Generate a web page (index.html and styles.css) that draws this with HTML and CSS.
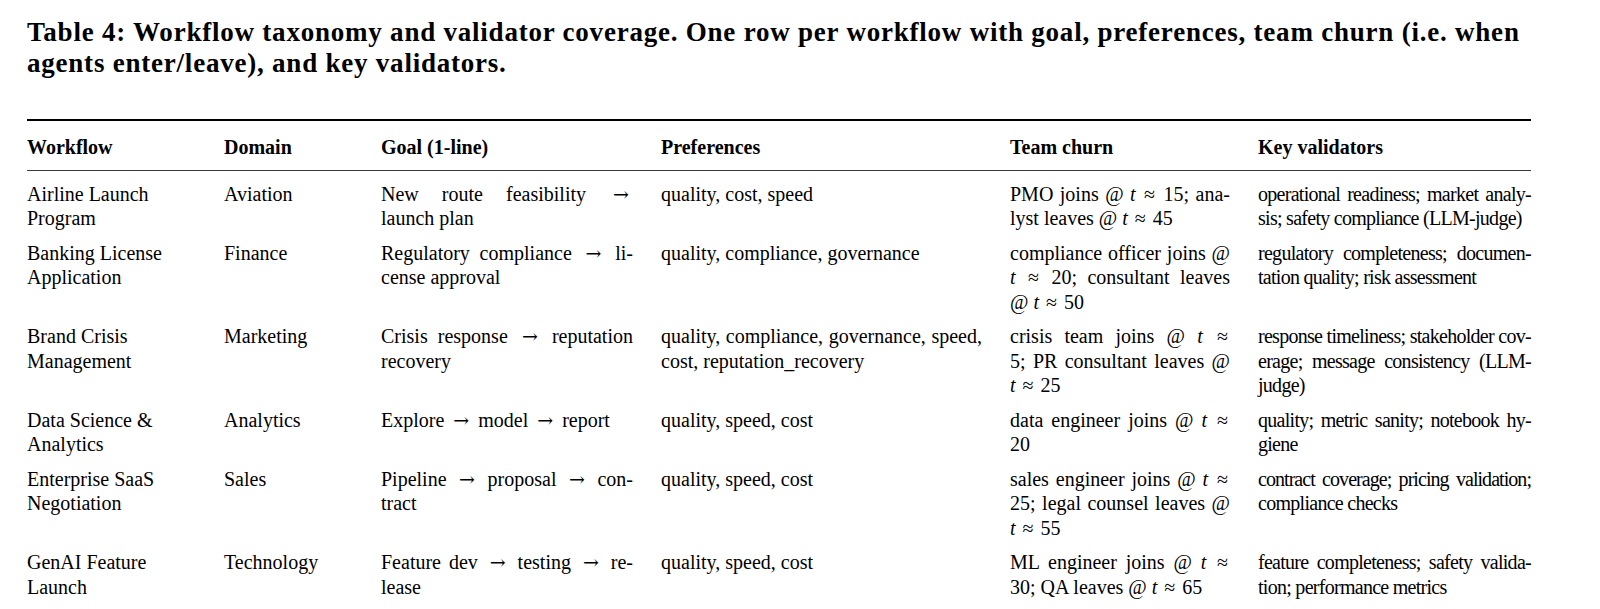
FILE: index.html
```html
<!DOCTYPE html>
<html lang="en">
<head>
<meta charset="utf-8">
<title>Table 4: Workflow taxonomy</title>
<link rel="stylesheet" href="styles.css">
</head>
<body>
<div class="page">
  <p class="caption"><span class="cap-line">Table 4: Workflow taxonomy and validator coverage. One row per workflow with goal, preferences, team churn (i.e. when</span><span class="cap-line">agents enter/leave), and key validators.</span></p>
  <table class="tax">
    <colgroup>
      <col class="c-wf"><col class="c-dom"><col class="c-goal"><col class="c-pref"><col class="c-churn"><col class="c-val">
    </colgroup>
    <thead>
      <tr><th>Workflow</th><th>Domain</th><th>Goal (1-line)</th><th>Preferences</th><th>Team churn</th><th>Key validators</th></tr>
    </thead>
    <tbody>
      <tr>
        <td><span class="ln">Airline Launch</span><span class="ln">Program</span></td>
        <td><span class="ln">Aviation</span></td>
        <td><span class="ln j">New route feasibility <span class="ar">→</span></span><span class="ln">launch plan</span></td>
        <td><span class="ln">quality, cost, speed</span></td>
        <td><span class="ln j">PMO joins @ <i>t</i> <span class="rel">≈</span> 15; ana-</span><span class="ln">lyst leaves @ <i>t</i> <span class="rel">≈</span> 45</span></td>
        <td class="val"><span class="ln j">operational readiness; market analy-</span><span class="ln">sis; safety compliance (LLM-judge)</span></td>
      </tr>
      <tr>
        <td><span class="ln">Banking License</span><span class="ln">Application</span></td>
        <td><span class="ln">Finance</span></td>
        <td><span class="ln j">Regulatory compliance <span class="ar">→</span> li-</span><span class="ln">cense approval</span></td>
        <td><span class="ln">quality, compliance, governance</span></td>
        <td><span class="ln j">compliance officer joins @</span><span class="ln j"><i>t</i> <span class="rel">≈</span> 20; consultant leaves</span><span class="ln">@ <i>t</i> <span class="rel">≈</span> 50</span></td>
        <td class="val"><span class="ln j">regulatory completeness; documen-</span><span class="ln">tation quality; risk assessment</span></td>
      </tr>
      <tr>
        <td><span class="ln">Brand Crisis</span><span class="ln">Management</span></td>
        <td><span class="ln">Marketing</span></td>
        <td><span class="ln j">Crisis response <span class="ar">→</span> reputation</span><span class="ln">recovery</span></td>
        <td><span class="ln j">quality, compliance, governance, speed,</span><span class="ln">cost, reputation_recovery</span></td>
        <td><span class="ln j">crisis team joins @ <i>t</i> <span class="rel">≈</span></span><span class="ln j">5; PR consultant leaves @</span><span class="ln"><i>t</i> <span class="rel">≈</span> 25</span></td>
        <td class="val"><span class="ln j">response timeliness; stakeholder cov-</span><span class="ln j">erage; message consistency (LLM-</span><span class="ln">judge)</span></td>
      </tr>
      <tr>
        <td><span class="ln">Data Science &amp;</span><span class="ln">Analytics</span></td>
        <td><span class="ln">Analytics</span></td>
        <td><span class="ln">Explore <span class="ar">→</span> model <span class="ar">→</span> report</span></td>
        <td><span class="ln">quality, speed, cost</span></td>
        <td><span class="ln j">data engineer joins @ <i>t</i> <span class="rel">≈</span></span><span class="ln">20</span></td>
        <td class="val"><span class="ln j">quality; metric sanity; notebook hy-</span><span class="ln">giene</span></td>
      </tr>
      <tr>
        <td><span class="ln">Enterprise SaaS</span><span class="ln">Negotiation</span></td>
        <td><span class="ln">Sales</span></td>
        <td><span class="ln j">Pipeline <span class="ar">→</span> proposal <span class="ar">→</span> con-</span><span class="ln">tract</span></td>
        <td><span class="ln">quality, speed, cost</span></td>
        <td><span class="ln j">sales engineer joins @ <i>t</i> <span class="rel">≈</span></span><span class="ln j">25; legal counsel leaves @</span><span class="ln"><i>t</i> <span class="rel">≈</span> 55</span></td>
        <td class="val"><span class="ln j tight">contract coverage; pricing validation;</span><span class="ln">compliance checks</span></td>
      </tr>
      <tr>
        <td><span class="ln">GenAI Feature</span><span class="ln">Launch</span></td>
        <td><span class="ln">Technology</span></td>
        <td><span class="ln j">Feature dev <span class="ar">→</span> testing <span class="ar">→</span> re-</span><span class="ln">lease</span></td>
        <td><span class="ln">quality, speed, cost</span></td>
        <td><span class="ln j">ML engineer joins @ <i>t</i> <span class="rel">≈</span></span><span class="ln">30; QA leaves @ <i>t</i> <span class="rel">≈</span> 65</span></td>
        <td class="val"><span class="ln j">feature completeness; safety valida-</span><span class="ln">tion; performance metrics</span></td>
      </tr>
    </tbody>
  </table>
</div>
</body>
</html>
```

FILE: styles.css
```css
html, body {
  margin: 0;
  padding: 0;
  background: #ffffff;
}

body {
  color: #000000;
  font-family: "Liberation Serif", "Times New Roman", serif;
}

.page {
  padding: 17px 0 0 27px;
  width: 1504px;
}

.caption {
  margin: 0;
  font-weight: bold;
  font-size: 27px;
  line-height: 31px;
  letter-spacing: 0.78px;
}

.cap-line {
  display: block;
  white-space: nowrap;
}

.tax {
  margin-top: 40px;
  width: 1504px;
  table-layout: fixed;
  border-collapse: separate;
  border-spacing: 0;
  font-size: 20px;
  line-height: 24.5px;
}

.c-wf { width: 197px; }
.c-dom { width: 157px; }
.c-goal { width: 280px; }
.c-pref { width: 349px; }
.c-churn { width: 248px; }
.c-val { width: 273px; }

.tax th {
  text-align: left;
  font-weight: bold;
  padding: 14px 28px 10px 0;
  border-top: 2px solid #000000;
  border-bottom: 1px solid #3a3a3a;
  white-space: nowrap;
}

.tax td {
  text-align: left;
  vertical-align: top;
  padding: 10px 28px 0 0;
}

.tax tbody tr:first-child td {
  padding-top: 11px;
}

.tax th:last-child,
.tax td:last-child {
  padding-right: 0;
}

.ln {
  display: block;
  white-space: nowrap;
}

.j {
  text-align: justify;
  text-align-last: justify;
}

.tax td.val {
  letter-spacing: -0.72px;
}

.tax td.val .tight {
  letter-spacing: -0.95px;
}

.tax i {
  font-style: italic;
}

.ar {
  font-family: "DejaVu Serif", serif;
  font-size: 19px;
  margin: 0 4px;
}

.rel {
  margin: 0 2px;
}
```
